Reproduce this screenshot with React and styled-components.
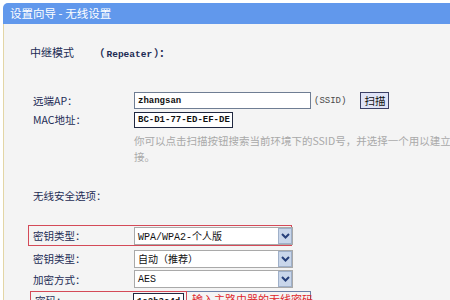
import React from 'react';
import styled, { createGlobalStyle } from 'styled-components';

const GlobalStyle = createGlobalStyle`
  html, body {
    margin: 0;
    padding: 0;
    background: #ffffff;
  }
  body {
    width: 450px;
    height: 300px;
    overflow: hidden;
    font-family: "Noto Sans CJK SC", sans-serif;
  }
`;

const S = {
  Page: styled.div`
    padding: 3px 0 0 3px;
    height: 300px;
    box-sizing: border-box;
    display: flex;
    flex-direction: column;
  `,
  TitleBar: styled.div`
    height: 21px;
    background: #6198ec;
    border-top-left-radius: 5px;
    color: #ffffff;
    font-size: 11.5px;
    line-height: 21px;
    padding-left: 7px;
  `,
  Body: styled.div`
    flex: 1;
    background: #f4f4f4;
    border-left: 1px solid #e3d6a6;
    padding: 20px 0 0 24px;
    overflow: hidden;
  `,
  ModeRow: styled.div`
    height: 16px;
    display: flex;
    align-items: center;
    font-size: 11px;
    color: #1d2c55;
    padding-left: 2px;
  `,
  ModeNote: styled.span`
    margin-left: 20px;
    font-size: 10.5px;
    font-weight: bold;
    white-space: nowrap;
  `,
  Latin: styled.span`
    font-family: "Liberation Mono", monospace;
    font-size: 9.5px;
    margin: 0 2px;
  `,
  Row: styled.div`
    display: grid;
    grid-template-columns: 105px auto;
    align-items: center;
    justify-content: start;
    height: ${(p) => p.$h}px;
    margin-top: ${(p) => p.$top}px;
    box-sizing: border-box;
    width: ${(p) => (p.$marked ? '264px' : 'auto')};
    border: ${(p) => (p.$marked ? '1px solid #d44a58' : 'none')};
    margin-left: ${(p) => (p.$marked ? '0' : '1px')};
  `,
  Label: styled.span`
    font-size: 10.5px;
    color: #1d2c55;
    padding-left: 4px;
    white-space: nowrap;
  `,
  Field: styled.div`
    display: flex;
    align-items: center;
  `,
  TextBox: styled.div`
    box-sizing: border-box;
    width: ${(p) => p.$w}px;
    height: ${(p) => p.$h}px;
    border: 1px solid ${(p) => p.$edge};
    background: #ffffff;
    font-family: "Liberation Mono", monospace;
    font-size: 9px;
    font-weight: bold;
    color: #111111;
    padding-left: 3px;
    display: flex;
    align-items: center;
  `,
  Unit: styled.span`
    font-family: "Liberation Mono", monospace;
    font-size: 9px;
    color: #4a4a4a;
    margin-left: 3px;
  `,
  ScanButton: styled.div`
    box-sizing: border-box;
    width: 29px;
    height: 17px;
    margin-left: 14px;
    background: #dfe3f7;
    border: 1px solid #3b3f66;
    font-size: 10.5px;
    color: #111111;
    display: flex;
    align-items: center;
    justify-content: center;
  `,
  Hint: styled.div`
    margin: 5px 0 0 106px;
    font-size: 10.5px;
    line-height: 16px;
    color: #a9a9a9;
    white-space: nowrap;
  `,
  Section: styled.div`
    margin-top: 22px;
    height: 16px;
    display: flex;
    align-items: center;
    padding-left: 5px;
    font-size: 10.5px;
    color: #1d2c55;
  `,
  Select: styled.div`
    box-sizing: border-box;
    width: 159px;
    height: 18px;
    border: 1px solid #a9a9a9;
    background: #ffffff;
    display: flex;
    align-items: center;
    justify-content: space-between;
  `,
  SelectText: styled.span`
    padding-left: 3px;
    font-family: "Liberation Mono", "Noto Sans CJK SC", monospace;
    font-size: 10px;
    color: #111111;
    white-space: nowrap;
  `,
  ArrowBox: styled.span`
    box-sizing: border-box;
    width: 14px;
    height: 16px;
    background: #c9d6ea;
    border: 1px solid #9fb0c9;
    display: flex;
    align-items: center;
    justify-content: center;
  `,
  PassRow: styled.div`
    margin-top: 3px;
    display: flex;
    align-items: flex-start;
  `,
  PassBox: styled.div`
    box-sizing: border-box;
    width: 157px;
    height: 22px;
    margin-left: 2px;
    border: 1px solid #d44a58;
    display: grid;
    grid-template-columns: 102px auto;
    align-items: start;
    padding-top: 1px;
  `,
  Warn: styled.div`
    box-sizing: border-box;
    width: 124px;
    height: 22px;
    border: 1px solid #6d7fa6;
    border-left: none;
    color: #e0262b;
    font-size: 11px;
    line-height: 14px;
    padding-left: 5px;
    white-space: nowrap;
  `,
};

const Chevron = () => (
  <svg width="9" height="6" viewBox="0 0 9 6">
    <path d="M1 1 L4.5 4.5 L8 1" fill="none" stroke="#27407a" strokeWidth="2" />
  </svg>
);

const Dropdown = ({ text }) => (
  <S.Select>
    <S.SelectText>{text}</S.SelectText>
    <S.ArrowBox>
      <Chevron />
    </S.ArrowBox>
  </S.Select>
);

const App = () => (
  <>
    <GlobalStyle />
    <S.Page>
      <S.TitleBar>设置向导 - 无线设置</S.TitleBar>
      <S.Body>
        <S.ModeRow>
          中继模式
          <S.ModeNote>
            （<S.Latin>Repeater</S.Latin>）：
          </S.ModeNote>
        </S.ModeRow>

        <S.Row $h={17} $top={32}>
          <S.Label>远端AP：</S.Label>
          <S.Field>
            <S.TextBox $w={177} $h={17} $edge="#6f7d93">zhangsan</S.TextBox>
            <S.Unit>(SSID)</S.Unit>
            <S.ScanButton>扫描</S.ScanButton>
          </S.Field>
        </S.Row>
        <S.Row $h={17} $top={2}>
          <S.Label>MAC地址：</S.Label>
          <S.TextBox $w={99} $h={16} $edge="#202840">BC-D1-77-ED-EF-DE</S.TextBox>
        </S.Row>
        <S.Hint>
          <div>你可以点击扫描按钮搜索当前环境下的SSID号，并选择一个用以建立连</div>
          <div>接。</div>
        </S.Hint>

        <S.Section>无线安全选项：</S.Section>

        <S.Row $h={21} $top={22} $marked>
          <S.Label>密钥类型：</S.Label>
          <Dropdown text="WPA/WPA2-个人版" />
        </S.Row>
        <S.Row $h={19} $top={3}>
          <S.Label>密钥类型：</S.Label>
          <Dropdown text="自动（推荐）" />
        </S.Row>
        <S.Row $h={18} $top={2}>
          <S.Label>加密方式：</S.Label>
          <Dropdown text="AES" />
        </S.Row>

        <S.PassRow>
          <S.PassBox>
            <S.Label>密码：</S.Label>
            <S.TextBox $w={51} $h={17} $edge="#202840">1a2b3c4d</S.TextBox>
          </S.PassBox>
          <S.Warn>输入主路由器的无线密码</S.Warn>
        </S.PassRow>
      </S.Body>
    </S.Page>
  </>
);

export default App;
